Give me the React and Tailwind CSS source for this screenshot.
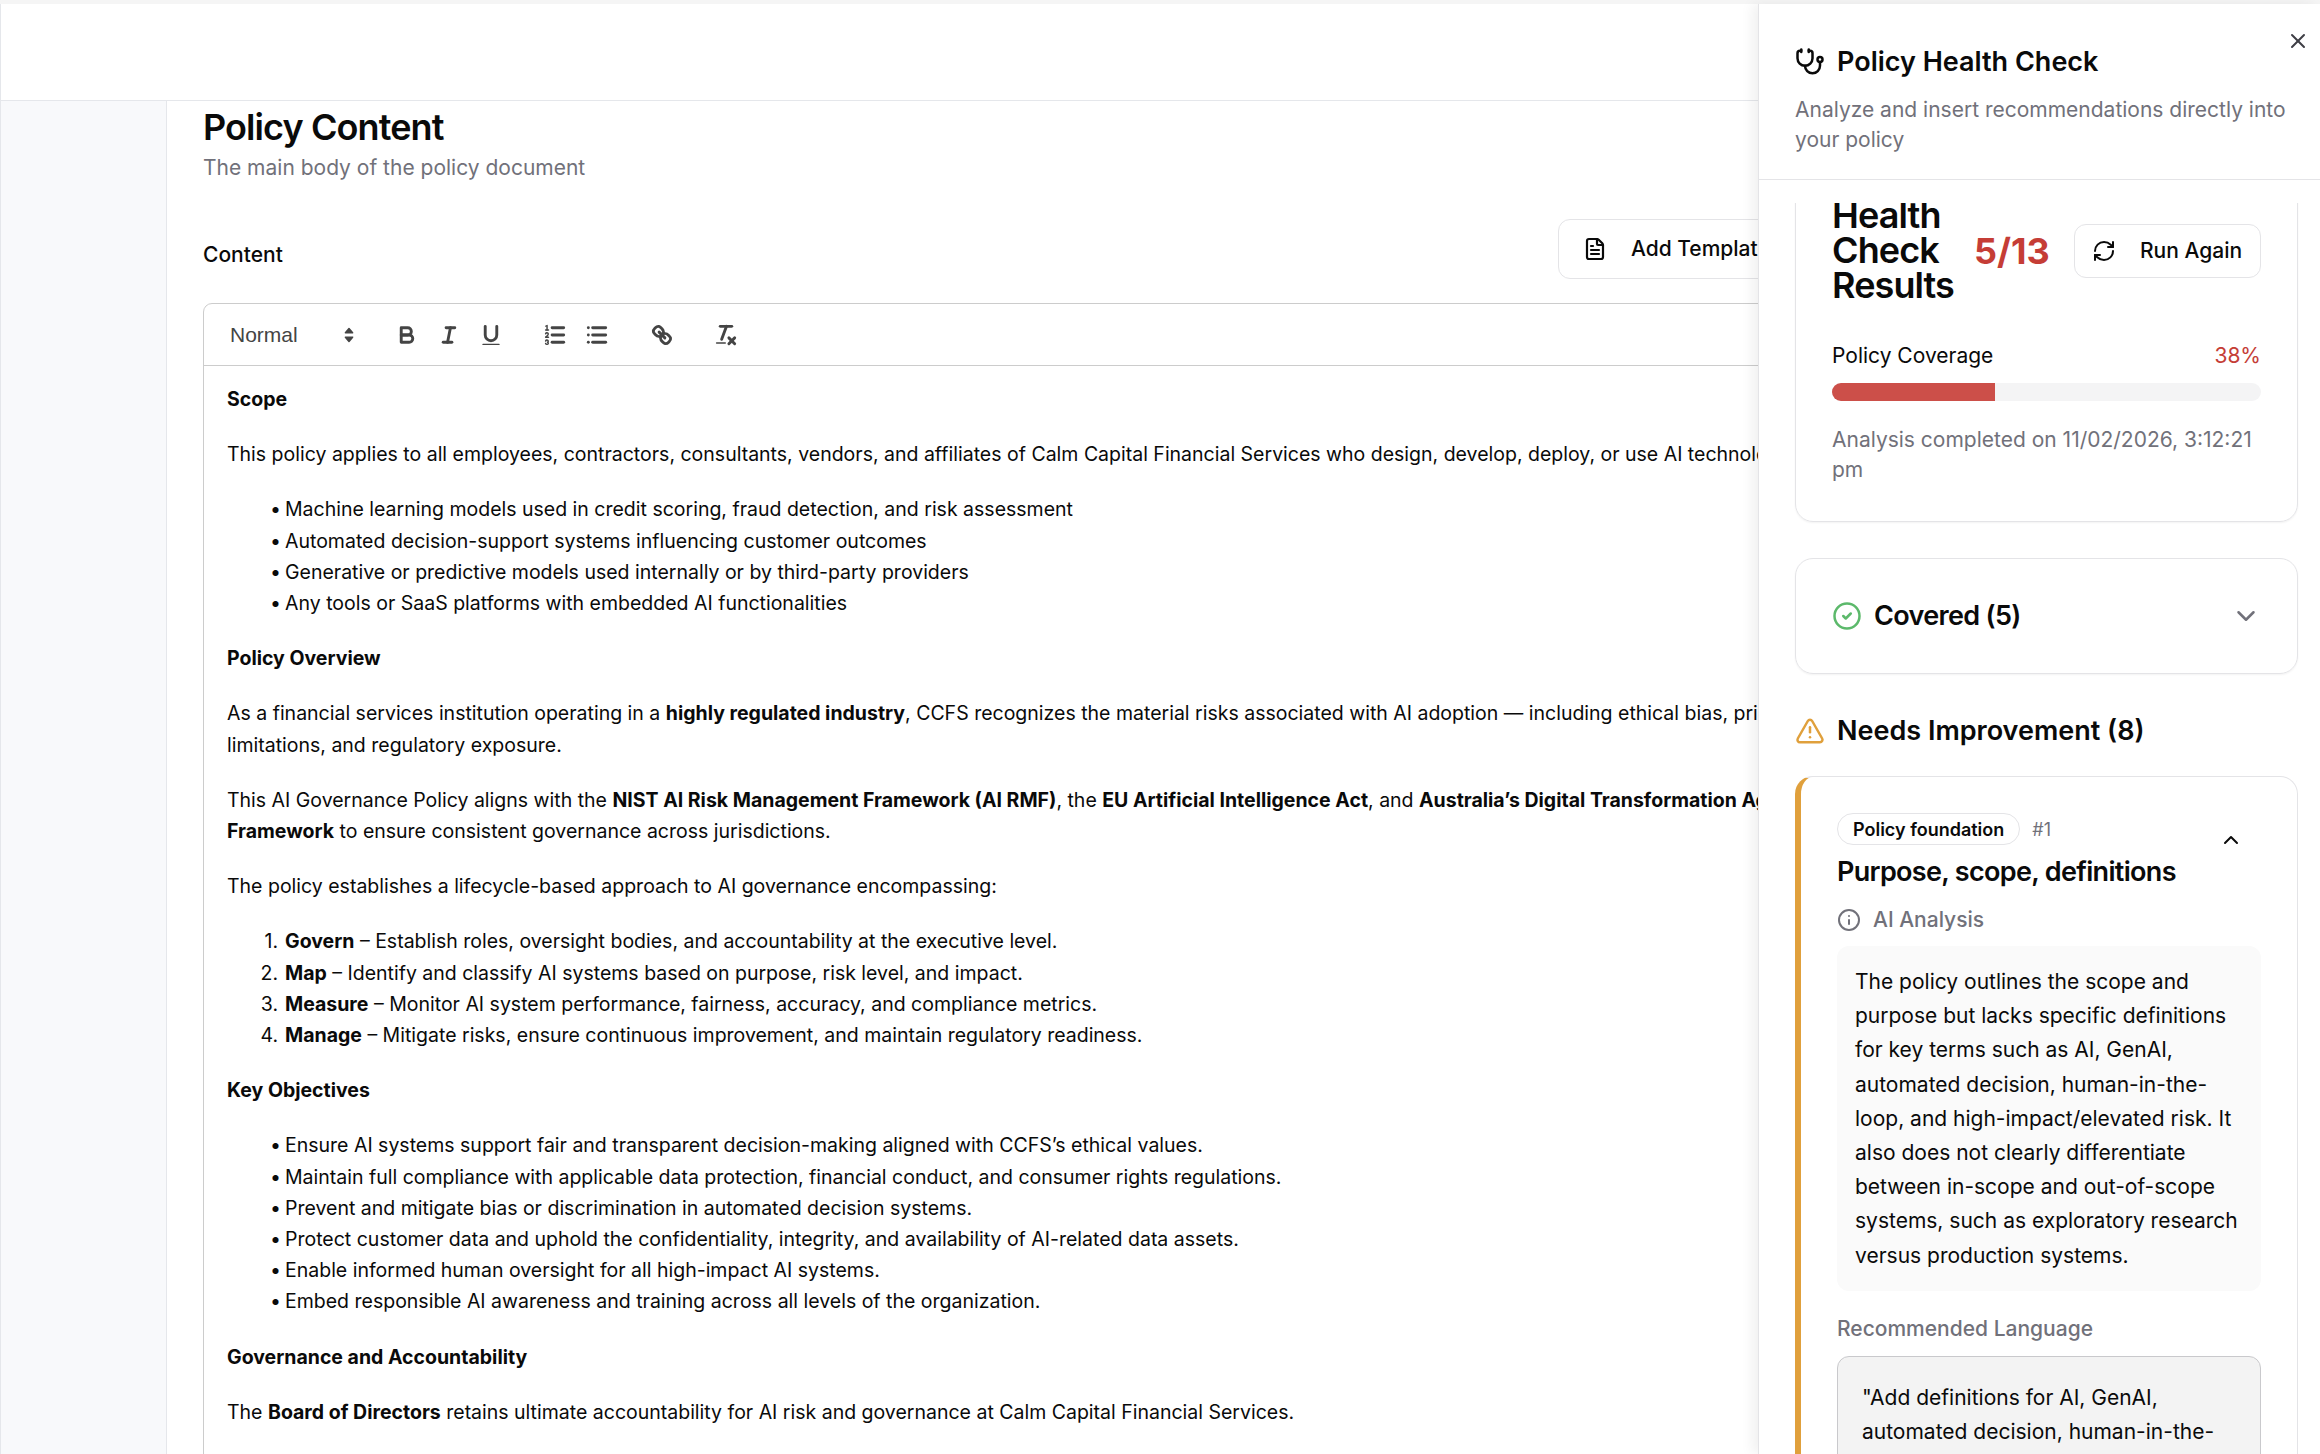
import React from "react";
import {
  Stethoscope,
  X,
  RefreshCw,
  CircleCheck,
  ChevronDown,
  ChevronUp,
  TriangleAlert,
  Info,
  FileText,
} from "lucide-react";

// Quill snow toolbar glyphs
const QuillIcon = ({ children }) => (
  <span className="w-[42px] h-[36px] flex items-center justify-center">
    <svg
      viewBox="0 0 18 18"
      className="w-[26px] h-[26px]"
      fill="none"
      stroke="#444"
      strokeWidth="2"
      strokeLinecap="round"
      strokeLinejoin="round"
    >
      {children}
    </svg>
  </span>
);

const Toolbar = () => (
  <div className="h-[62px] border-b border-[#ccc] pl-[12px] flex items-center font-['Liberation_Sans',sans-serif]">
    <div className="w-[147px] mr-[22.5px] pl-[14px] pr-[1px] flex items-center justify-between text-[21px] text-[#444]">
      <span>Normal</span>
      <svg viewBox="0 0 18 18" className="w-[26px] h-[26px]" fill="#444">
        <polygon points="6.5 7.5 9 4.5 11.5 7.5" stroke="#444" strokeLinejoin="round" />
        <polygon points="6.5 10.5 9 13.5 11.5 10.5" stroke="#444" strokeLinejoin="round" />
      </svg>
    </div>
    <div className="flex mr-[22.5px]">
      <QuillIcon>
        <path d="M5,4H9.5A2.5,2.5,0,0,1,12,6.5v0A2.5,2.5,0,0,1,9.5,9H5V4Z" />
        <path d="M5,9h5.5A2.5,2.5,0,0,1,13,11.5v0A2.5,2.5,0,0,1,10.5,14H5V9Z" />
      </QuillIcon>
      <QuillIcon>
        <line x1="7" x2="13" y1="4" y2="4" />
        <line x1="5" x2="11" y1="14" y2="14" />
        <line x1="8" x2="10" y1="14" y2="4" />
      </QuillIcon>
      <QuillIcon>
        <path d="M5,3V9a4.012,4.012,0,0,0,4,4H9a4.012,4.012,0,0,0,4-4V3" />
        <rect x="3" y="15" width="12" height="1" rx="0.5" fill="#444" stroke="none" />
      </QuillIcon>
    </div>
    <div className="flex mr-[22.5px]">
      <QuillIcon>
        <line x1="7" x2="15" y1="4" y2="4" />
        <line x1="7" x2="15" y1="9" y2="9" />
        <line x1="7" x2="15" y1="14" y2="14" />
        <line x1="2.5" x2="4.5" y1="5.5" y2="5.5" strokeWidth="1" />
        <path d="M3.5,6A0.5,0.5,0,0,1,3,5.5V3.085l-0.276.138A0.5,0.5,0,0,1,2.053,3c-0.124-.247-0.023-0.324.224-0.447l1-.5A0.5,0.5,0,0,1,4,2.5v3A0.5,0.5,0,0,1,3.5,6Z" fill="#444" stroke="none" />
        <path d="M4.5,10.5h-2c0-.234,1.85-1.076,1.85-2.234A0.959,0.959,0,0,0,2.5,8.156" strokeWidth="1" />
        <path d="M2.5,14.846a0.959,0.959,0,0,0,1.85-.109A0.7,0.7,0,0,0,3.75,14a0.688,0.688,0,0,0,.6-0.736,0.959,0.959,0,0,0-1.85-.109" strokeWidth="1" />
      </QuillIcon>
      <QuillIcon>
        <line x1="6" x2="15" y1="4" y2="4" />
        <line x1="6" x2="15" y1="9" y2="9" />
        <line x1="6" x2="15" y1="14" y2="14" />
        <line x1="3" x2="3" y1="4" y2="4" />
        <line x1="3" x2="3" y1="9" y2="9" />
        <line x1="3" x2="3" y1="14" y2="14" />
      </QuillIcon>
    </div>
    <div className="flex mr-[22.5px]">
      <QuillIcon>
        <line x1="7" x2="11" y1="7" y2="11" />
        <path d="M8.9,4.577a3.476,3.476,0,0,1,.36,4.679A3.476,3.476,0,0,1,4.577,8.9C3.185,7.5,2.035,6.4,4.217,4.217S7.5,3.185,8.9,4.577Z" />
        <path d="M13.423,9.1a3.476,3.476,0,0,0-4.679-.36,3.476,3.476,0,0,0,.36,4.679c1.392,1.392,2.5,2.542,4.679.36S14.815,10.5,13.423,9.1Z" />
      </QuillIcon>
    </div>
    <QuillIcon>
      <line x1="5" x2="13" y1="3" y2="3" />
      <line x1="6" x2="9.35" y1="12" y2="3" />
      <line x1="11" x2="15" y1="11" y2="15" />
      <line x1="15" x2="11" y1="11" y2="15" />
      <rect x="2" y="14" width="7" height="1" rx="0.5" fill="#444" stroke="none" />
    </QuillIcon>
  </div>
);

const Bullets = ({ items }) => (
  <ul className="mb-[24px] pl-[58px]">
    {items.map((item) => (
      <li key={item} className="flex">
        <span className="w-[15px] -ml-[15px] shrink-0">•</span>
        <span>{item}</span>
      </li>
    ))}
  </ul>
);

const Numbered = ({ items }) => (
  <ol className="mb-[24px] pl-[58px]">
    {items.map(([term, rest], i) => (
      <li key={term} className="flex">
        <span className="w-[30px] -ml-[30px] pr-[7px] text-right shrink-0">{i + 1}.</span>
        <span>
          <strong className="font-bold">{term}</strong> {rest}
        </span>
      </li>
    ))}
  </ol>
);

const Editor = () => (
  <div className="border border-[#ccc] rounded-t-[9px] w-full">
    <Toolbar />
    <div className="pt-[18px] pl-[23px] pr-[23px] min-h-[1300px] text-[19.5px] leading-[31.2px] text-[#0a0a0a] whitespace-nowrap">
      <p className="mb-[24px] font-bold">Scope</p>
      <p className="mb-[24px]">
        This policy applies to all employees, contractors, consultants, vendors, and affiliates of Calm Capital Financial Services who design, develop, deploy, or use AI technologies
      </p>
      <Bullets
        items={[
          "Machine learning models used in credit scoring, fraud detection, and risk assessment",
          "Automated decision-support systems influencing customer outcomes",
          "Generative or predictive models used internally or by third-party providers",
          "Any tools or SaaS platforms with embedded AI functionalities",
        ]}
      />
      <p className="mb-[24px] font-bold">Policy Overview</p>
      <p className="mb-[24px]">
        As a financial services institution operating in a <strong className="font-bold">highly regulated industry</strong>, CCFS recognizes the material risks associated with AI adoption — including ethical bias, privacy
        <br />
        limitations, and regulatory exposure.
      </p>
      <p className="mb-[24px]">
        This AI Governance Policy aligns with the <strong className="font-bold">NIST AI Risk Management Framework (AI RMF)</strong>, the <strong className="font-bold">EU Artificial Intelligence Act</strong>, and <strong className="font-bold">Australia’s Digital Transformation Agency</strong>
        <br />
        <strong className="font-bold">Framework</strong> to ensure consistent governance across jurisdictions.
      </p>
      <p className="mb-[24px]">The policy establishes a lifecycle-based approach to AI governance encompassing:</p>
      <Numbered
        items={[
          ["Govern", "– Establish roles, oversight bodies, and accountability at the executive level."],
          ["Map", "– Identify and classify AI systems based on purpose, risk level, and impact."],
          ["Measure", "– Monitor AI system performance, fairness, accuracy, and compliance metrics."],
          ["Manage", "– Mitigate risks, ensure continuous improvement, and maintain regulatory readiness."],
        ]}
      />
      <p className="mb-[24px] font-bold">Key Objectives</p>
      <Bullets
        items={[
          "Ensure AI systems support fair and transparent decision-making aligned with CCFS’s ethical values.",
          "Maintain full compliance with applicable data protection, financial conduct, and consumer rights regulations.",
          "Prevent and mitigate bias or discrimination in automated decision systems.",
          "Protect customer data and uphold the confidentiality, integrity, and availability of AI-related data assets.",
          "Enable informed human oversight for all high-impact AI systems.",
          "Embed responsible AI awareness and training across all levels of the organization.",
        ]}
      />
      <p className="mb-[24px] font-bold">Governance and Accountability</p>
      <p className="mb-[24px]">
        The <strong className="font-bold">Board of Directors</strong> retains ultimate accountability for AI risk and governance at Calm Capital Financial Services.
      </p>
    </div>
  </div>
);

const HealthPanel = () => (
  <aside className="w-[562px] shrink-0 relative z-10 bg-white border-l border-[#e4e4e7] shadow-[-6px_0_12px_rgba(0,0,0,0.06)] flex flex-col overflow-hidden">
    <button className="absolute top-[25px] right-[10px] text-[#3f3f46]">
      <X size={24} strokeWidth={2} />
    </button>

    <div className="h-[176px] shrink-0 border-b border-[#e4e4e7] pt-[42px] pl-[36px] pr-[22px]">
      <div className="flex items-center gap-[12px] h-[32px]">
        <Stethoscope size={30} strokeWidth={2} className="text-[#0a0a0a]" />
        <h2 className="text-[27px] leading-[32px] font-semibold text-[#0a0a0a]">Policy Health Check</h2>
      </div>
      <p className="mt-[17px] text-[21px] leading-[30px] text-[#71717a]">
        Analyze and insert recommendations directly into your policy
      </p>
    </div>

    <div className="mt-[23px] flex-1 overflow-hidden pl-[36px] pr-[22px]">
      <div className="-mt-[42px]">
        <section className="border border-[#e4e4e7] rounded-[18px] shadow-[0_1px_2px_rgba(0,0,0,0.05)] pt-[36px] pb-[36px] px-[36px]">
          <div className="flex items-center justify-between">
            <h3 className="w-[96px] text-[36px] leading-[35px] font-semibold tracking-tight text-[#0a0a0a]">
              Health Check Results
            </h3>
            <span className="text-[36px] leading-[40px] font-bold text-[#c53d36] ml-[46px]">5/13</span>
            <button className="ml-auto h-[54px] w-[187px] border border-[#e4e4e7] rounded-[12px] pl-[17px] flex items-center gap-[24px] text-[21px] font-medium text-[#0a0a0a]">
              <RefreshCw size={24} strokeWidth={2} />
              Run Again
            </button>
          </div>
          <div className="mt-[38px] flex items-center justify-between text-[21px] leading-[30px]">
            <span className="text-[#0a0a0a]">Policy Coverage</span>
            <span className="text-[#c53d36]">38%</span>
          </div>
          <div className="mt-[12px] h-[18px] rounded-full bg-[#f4f4f5] overflow-hidden">
            <div className="h-full w-[38%] bg-[#cc4f49]" />
          </div>
          <p className="mt-[24px] text-[21px] leading-[30px] text-[#71717a]">
            Analysis completed on 11/02/2026, 3:12:21 pm
          </p>
        </section>

        <section className="mt-[36px] h-[116px] border border-[#e4e4e7] rounded-[18px] shadow-[0_1px_2px_rgba(0,0,0,0.05)] pl-[36px] pr-[36px] flex items-center justify-between">
          <div className="flex items-center gap-[12px]">
            <CircleCheck size={30} strokeWidth={2} className="text-[#5cb96b]" />
            <span className="text-[27px] font-semibold tracking-tight text-[#0a0a0a]">Covered (5)</span>
          </div>
          <ChevronDown size={30} strokeWidth={2} className="text-[#71717a]" />
        </section>

        <div className="mt-[36px] flex items-center gap-[12px] h-[42px]">
          <TriangleAlert size={30} strokeWidth={2} className="text-[#e0a03c]" />
          <span className="text-[27px] font-semibold text-[#0a0a0a]">Needs Improvement (8)</span>
        </div>

        <section className="mt-[24px] border border-[#e4e4e7] border-l-[6px] border-l-[#e0a03c] rounded-[18px] pt-[36px] pl-[36px] pr-[36px] pb-[40px]">
          <div className="flex items-start justify-between">
            <div>
              <div className="flex items-center gap-[12px]">
                <span className="h-[32px] px-[15px] border border-[#e4e4e7] rounded-full flex items-center text-[18px] font-semibold text-[#0a0a0a]">
                  Policy foundation
                </span>
                <span className="text-[18px] text-[#71717a]">#1</span>
              </div>
              <h4 className="mt-[9px] text-[27px] leading-[36px] font-semibold tracking-tight text-[#0a0a0a]">
                Purpose, scope, definitions
              </h4>
            </div>
            <ChevronUp size={24} strokeWidth={2} className="mt-[15px] mr-[18px] text-[#0a0a0a]" />
          </div>
          <div className="mt-[15px] flex items-center gap-[12px] text-[21px] leading-[30px] font-medium text-[#71717a]">
            <Info size={24} strokeWidth={2} />
            AI Analysis
          </div>
          <p className="mt-[11px] h-[345px] bg-[#fafafa] rounded-[12px] pt-[19px] pl-[18px] pr-[12px] text-[21px] leading-[34.2px] text-[#0a0a0a]">
            The policy outlines the scope and purpose but lacks specific definitions for key terms such as AI, GenAI, automated decision, human-in-the-loop, and high-impact/elevated risk. It also does not clearly differentiate between in-scope and out-of-scope systems, such as exploratory research versus production systems.
          </p>
          <div className="mt-[23px] text-[21px] leading-[30px] font-medium text-[#71717a]">Recommended Language</div>
          <div className="mt-[12px] bg-[#f3f3f3] border border-[#c9c9cc] rounded-[12px] pt-[24px] pl-[24px] pr-[24px] pb-[24px] text-[21px] leading-[34.2px] text-[#0a0a0a]">
            "Add definitions for AI, GenAI, automated decision, human-in-the-loop
          </div>
        </section>
      </div>
    </div>
  </aside>
);

const App = () => {
  return (
    <div className="w-full h-screen overflow-hidden flex flex-col bg-[#f5f5f5] font-['Inter',sans-serif]">
      <div className="flex-1 mt-[4px] flex min-h-0">
        <div className="flex-1 min-w-0 flex flex-col overflow-hidden border-l border-[#e5e7eb] bg-white">
          <header className="h-[97px] shrink-0 bg-white border-b border-[#e5e7eb]" />
          <div className="flex-1 min-h-0 flex">
            <div className="w-[166px] shrink-0 bg-[#f8f9fb] border-r border-[#e5e7eb]" />
            <main className="flex-1 min-w-0 bg-white pl-[36px] pt-[6px] overflow-hidden">
              <div className="w-[1705px]">
                <h1 className="text-[36px] leading-[40px] font-semibold tracking-tight text-[#0a0a0a]">Policy Content</h1>
                <p className="mt-[6px] text-[21px] leading-[30px] text-[#71717a]">The main body of the policy document</p>
                <div className="mt-[36px] flex items-center justify-between">
                  <span className="pt-[11px] text-[21px] leading-[30px] font-medium text-[#0a0a0a]">Content</span>
                  <button className="h-[60px] w-[350px] border border-[#e4e4e7] rounded-[12px] pl-[24px] flex items-center gap-[24px] text-[21px] font-medium text-[#0a0a0a] whitespace-nowrap">
                    <FileText size={24} strokeWidth={2.2} />
                    Add Template
                  </button>
                </div>
                <div className="mt-[24px]">
                  <Editor />
                </div>
              </div>
            </main>
          </div>
        </div>
        <HealthPanel />
      </div>
    </div>
  );
};

export default App;
